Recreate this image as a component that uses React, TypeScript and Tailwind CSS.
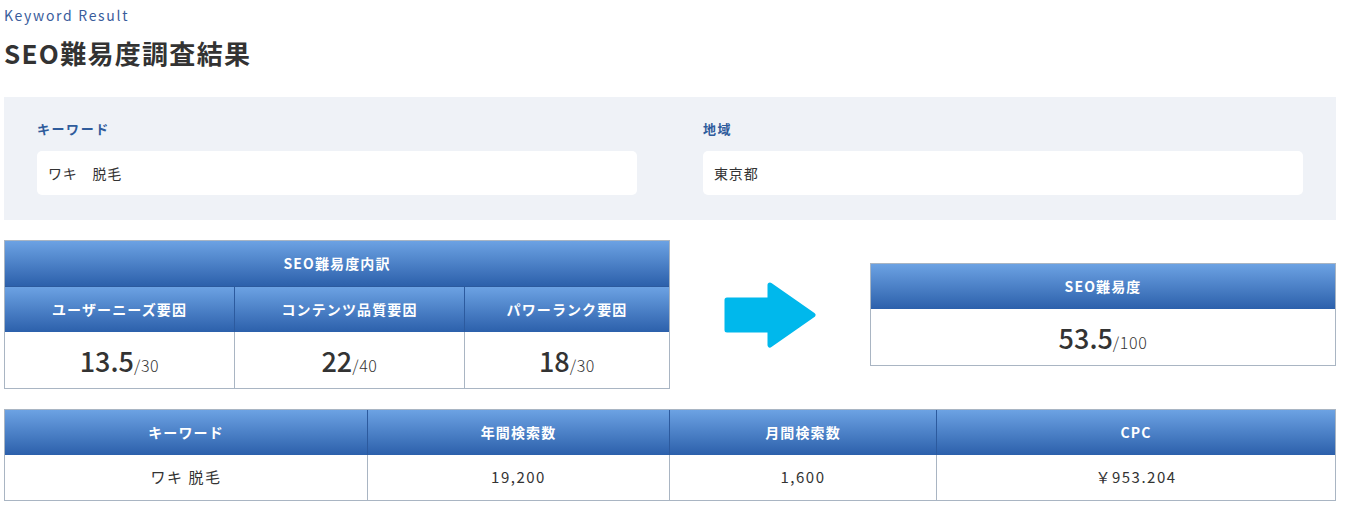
import React from "react";

const HEAD =
  "bg-[linear-gradient(to_bottom,#6ca2e3,#2c60ab)] text-white font-bold text-[14px] tracking-[0.08em] flex items-center justify-center";

function Score({ value, max }: { value: string; max: string }) {
  return (
    <div className="flex items-baseline justify-center text-[#333]">
      <span className="text-[27px] font-medium leading-none">{value}</span>
      <span className="text-[16px] font-light leading-none tracking-[0.04em]">/{max}</span>
    </div>
  );
}

function Arrow() {
  return (
    <svg width="92" height="66" viewBox="0 0 92 66">
      <path
        d="M3 18 H46 V3 L89 33 L46 63 V48 H3 Z"
        fill="#00b8ec"
        stroke="#00b8ec"
        strokeWidth="5"
        strokeLinejoin="round"
      />
    </svg>
  );
}

export default function App() {
  const factors = [
    { label: "ユーザーニーズ要因", value: "13.5", max: "30" },
    { label: "コンテンツ品質要因", value: "22", max: "40" },
    { label: "パワーランク要因", value: "18", max: "30" },
  ];
  const cols = ["キーワード", "年間検索数", "月間検索数", "CPC"];
  const row = ["ワキ 脱毛", "19,200", "1,600", "￥953.204"];

  return (
    <div className="w-[1346px] bg-white pl-[4px] pr-[10px] font-['Noto_Sans_CJK_JP','Noto_Sans',sans-serif] text-[#333]">
      <div className="pt-[5px] text-[14px] leading-[20px] tracking-[0.12em] text-[#3a5d9c]">
        Keyword Result
      </div>
      <h1 className="mt-[10px] text-[26px] font-bold leading-[36px] tracking-[0.05em] text-[#333]">
        SEO難易度調査結果
      </h1>

      <div className="mt-[26px] grid grid-cols-[600px_600px] gap-x-[66px] bg-[#eff2f7] pl-[33px] pt-[21px] pb-[25px]">
        {[
          { label: "キーワード", value: "ワキ　脱毛" },
          { label: "地域", value: "東京都" },
        ].map((f) => (
          <div key={f.label}>
            <div className="text-[13px] font-bold leading-[22px] tracking-[0.12em] text-[#2f5c9c]">
              {f.label}
            </div>
            <div className="mt-[11px] flex h-[44px] items-center rounded-[5px] bg-white px-[11px] text-[14px] tracking-[0.06em] text-[#333]">
              {f.value}
            </div>
          </div>
        ))}
      </div>

      <div className="mt-[20px] flex items-center">
        <div className="w-[666px] border border-[#a9b5c3]">
          <div className={`${HEAD} h-[46px] border-b border-[#2c5a9e]`}>SEO難易度内訳</div>
          <div className="grid grid-cols-[229px_230px_1fr]">
            {factors.map((f, i) => (
              <div
                key={f.label}
                className={`${HEAD} h-[45px] ${i > 0 ? "border-l border-[#2c5a9e]" : ""}`}
              >
                {f.label}
              </div>
            ))}
            {factors.map((f, i) => (
              <div
                key={f.label + "v"}
                className={`flex h-[56px] items-center justify-center ${i > 0 ? "border-l border-[#a9b5c3]" : ""}`}
              >
                <Score value={f.value} max={f.max} />
              </div>
            ))}
          </div>
        </div>

        <div className="flex w-[200px] justify-center">
          <Arrow />
        </div>

        <div className="w-[466px] border border-[#a9b5c3]">
          <div className={`${HEAD} h-[45px]`}>SEO難易度</div>
          <div className="flex h-[56px] items-center justify-center">
            <Score value="53.5" max="100" />
          </div>
        </div>
      </div>

      <div className="mt-[20px] border border-[#a9b5c3]">
        <div className="grid grid-cols-[362px_302px_267px_1fr]">
          {cols.map((c, i) => (
            <div
              key={c}
              className={`${HEAD} h-[45px] ${i > 0 ? "border-l border-[#2c5a9e]" : ""}`}
            >
              {c}
            </div>
          ))}
          {row.map((c, i) => (
            <div
              key={c}
              className={`flex h-[45px] items-center justify-center text-[15px] tracking-[0.1em] text-[#333] ${i > 0 ? "border-l border-[#a9b5c3]" : ""}`}
            >
              {c}
            </div>
          ))}
        </div>
      </div>
      <div className="h-[18px]" />
    </div>
  );
}
